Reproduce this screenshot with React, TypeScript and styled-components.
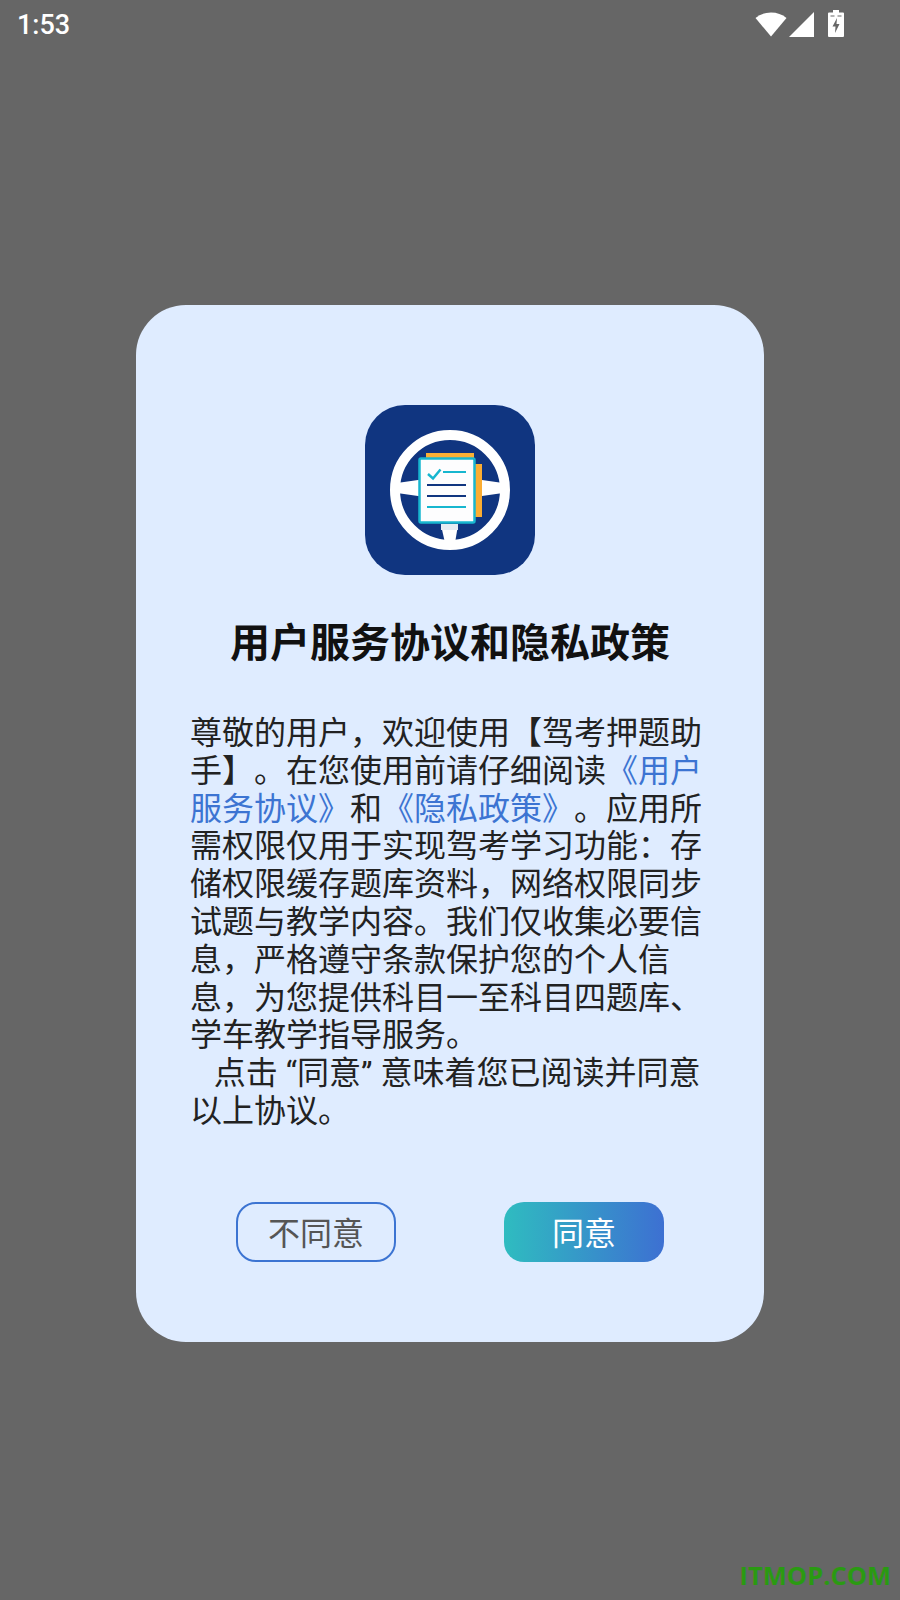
import { createGlobalStyle, styled } from 'styled-components';

const GlobalStyle = createGlobalStyle`
  html, body {
    margin: 0;
    padding: 0;
    background: #666666;
  }
  * {
    box-sizing: border-box;
  }
`;

function WifiIcon() {
  return (
    <svg width="32" height="25" viewBox="0 0 32 25">
      <path d="M16 24.500 L0.500 6 Q7 0.500 16 0.500 Q25 0.500 31.500 6 Z" fill="#fff" />
    </svg>
  );
}

function SignalIcon() {
  return (
    <svg width="25" height="25" viewBox="0 0 25 25">
      <path d="M0 25 L25 0 L25 25 Z" fill="#fff" />
    </svg>
  );
}

function BatteryIcon() {
  return (
    <svg width="16" height="27" viewBox="0 0 16 27">
      <path
        fillRule="evenodd"
        fill="#fff"
        d="M5 0 H11 V2.500 H15 Q16 2.500 16 3.500 V26 Q16 27 15 27 H1 Q0 27 0 26 V3.500 Q0 2.500 1 2.500 H5 Z M2.500 5.500 V6.500 H6.500 V5.500 Z M9.500 5.500 V6.500 H13.500 V5.500 Z M9 8 L4.500 16.500 H7.500 L7 23 L11.500 14 H8.500 Z"
      />
    </svg>
  );
}

function AppLogo() {
  return (
    <LogoSvg viewBox="0 0 170 170">
      <rect width="170" height="170" rx="40" fill="#103580" />
      <circle cx="85" cy="85" r="55" fill="none" stroke="#fff" strokeWidth="10" />
      <path d="M32 78 L60 74 V92 L32 88 Z" fill="#fff" />
      <path d="M138 78 L110 74 V92 L138 88 Z" fill="#fff" />
      <rect x="110" y="74" width="7" height="18" fill="#e6ebf2" />
      <path d="M76 120 H93 L90 138 H80 Z" fill="#fff" />
      <rect x="76" y="119" width="17" height="6" fill="#e6ebf2" />
      <rect x="61" y="48" width="48" height="8" fill="#fbb034" />
      <rect x="110" y="59" width="7" height="53" fill="#fbad32" />
      <rect x="54.500" y="53.500" width="55" height="64" rx="1.500" fill="#fdfdfe" stroke="#17b6cf" strokeWidth="2.500" />
      <path d="M63 69 L68 73.500 L75.500 64.500" fill="none" stroke="#17b6cf" strokeWidth="2.500" />
      <rect x="78" y="66" width="23" height="2" fill="#17b6cf" />
      <rect x="62" y="79" width="39" height="2" fill="#103580" />
      <rect x="62" y="90" width="39" height="2" fill="#103580" />
      <rect x="62" y="101" width="39" height="2" fill="#17b6cf" />
    </LogoSvg>
  );
}

function App() {
  return (
    <Page>
      <GlobalStyle />
      <StatusBar>
        <Clock>1:53</Clock>
        <StatusIcons>
          <WifiIcon />
          <SignalIcon />
          <BatteryIcon />
        </StatusIcons>
      </StatusBar>
      <Dialog>
        <AppLogo />
        <Title>用户服务协议和隐私政策</Title>
        <Message>
          {'尊敬的用户\uFF0C欢迎使用【驾考押题助手】。在您使用前请仔细阅读'}
          <PolicyLink>《用户服务协议》</PolicyLink>和<PolicyLink>《隐私政策》</PolicyLink>
          {'。应用所需权限仅用于实现驾考学习功能\uFF1A存储权限缓存题库资料\uFF0C网络权限同步试题与教学内容。我们仅收集必要信息\uFF0C严格遵守条款保护您的个人信息\uFF0C为您提供科目一至科目四题库、学车教学指导服务。'}
          {'\n   点击 “同意” 意味着您已阅读并同意以上协议。'}
        </Message>
        <ButtonRow>
          <DeclineButton>不同意</DeclineButton>
          <AgreeButton>同意</AgreeButton>
        </ButtonRow>
      </Dialog>
      <Watermark>ITMOP.COM</Watermark>
    </Page>
  );
}
export default App;

const Page = styled.div`
  position: relative;
  width: 900px;
  height: 1600px;
  overflow: hidden;
  background: #666666;
  display: flex;
  flex-direction: column;
  align-items: center;
  font-family: Roboto, 'Noto Sans CJK SC', sans-serif;
`;

const StatusBar = styled.div`
  width: 100%;
  height: 50px;
  padding: 0 56px 0 17px;
  display: flex;
  align-items: center;
  justify-content: space-between;
`;

const Clock = styled.span`
  color: #fff;
  font-size: 27px;
  font-weight: 500;
  line-height: 50px;
`;

const StatusIcons = styled.div`
  display: flex;
  align-items: flex-end;
  gap: 2px;
  height: 27px;
  margin-top: -3px;

  svg:last-child {
    margin-left: 12px;
  }
`;

const Dialog = styled.div`
  width: 628px;
  height: 1037px;
  margin-top: 255px;
  padding: 100px 54px 0;
  background: #dfecff;
  border-radius: 50px;
  display: flex;
  flex-direction: column;
  align-items: center;
`;

const LogoSvg = styled.svg`
  display: block;
  flex: none;
  width: 170px;
  height: 170px;
`;

const Title = styled.h1`
  margin: 44px 0 0;
  color: #111111;
  font-size: 40px;
  line-height: 50px;
  font-weight: 700;
`;

const Message = styled.p`
  align-self: flex-start;
  width: 514px;
  height: 416px;
  margin: 46px 0 0;
  color: #222222;
  font-size: 32px;
  line-height: 37.800px;
  white-space: pre-wrap;
  text-spacing-trim: space-all;
`;

const PolicyLink = styled.span`
  color: #3c74d2;
`;

const ButtonRow = styled.div`
  width: 428px;
  margin-top: 71px;
  display: flex;
  justify-content: space-between;
`;

const DeclineButton = styled.button`
  width: 160px;
  height: 60px;
  padding: 0 0 2px;
  border: 2px solid #3c74d2;
  border-radius: 20px;
  background: transparent;
  color: #555555;
  font-family: inherit;
  font-size: 32px;
`;

const AgreeButton = styled.button`
  width: 160px;
  height: 60px;
  padding: 0 0 2px;
  border: none;
  border-radius: 20px;
  background: linear-gradient(90deg, #2fbcc0, #3d70d2);
  color: #fff;
  font-family: inherit;
  font-size: 32px;
`;

const Watermark = styled.div`
  position: absolute;
  right: 9px;
  bottom: 8px;
  color: #2a9a12;
  font-family: 'Open Sans', sans-serif;
  font-size: 25.500px;
  line-height: 34px;
  font-weight: 700;
`;
